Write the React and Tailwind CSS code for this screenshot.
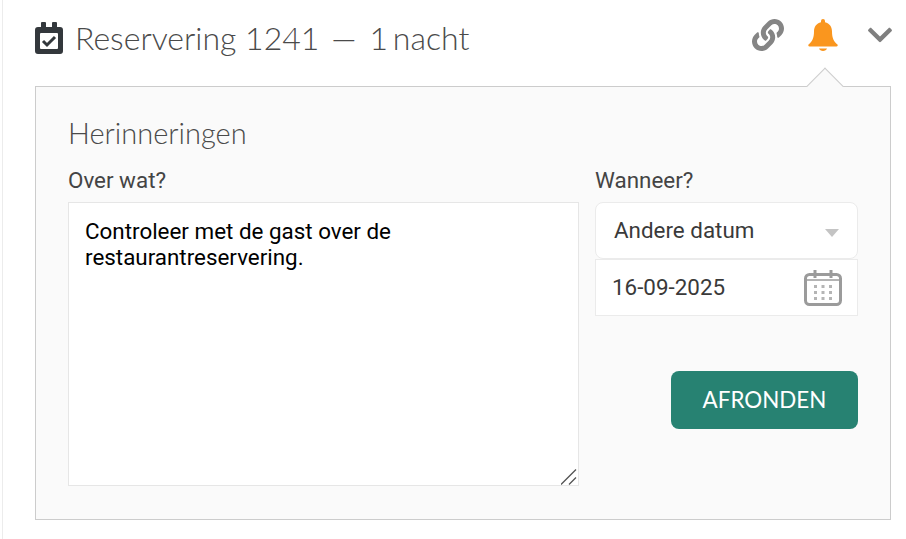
import React from 'react';
import { FaLink, FaChevronDown } from 'react-icons/fa';

function ReservationIcon() {
  return (
    <svg width="28" height="32" viewBox="0 0 28 32" className="shrink-0">
      <path d="M7 0h3a1 1 0 0 1 1 1v4h6V1a1 1 0 0 1 1-1h3a1 1 0 0 1 1 1v4h3a3 3 0 0 1 3 3v21a3 3 0 0 1-3 3H3a3 3 0 0 1-3-3V8a3 3 0 0 1 3-3h3V1a1 1 0 0 1 1-1z" fill="#33383c" />
      <rect x="5" y="11" width="18" height="16" rx="1" fill="#fff" />
      <path d="M8 19l4 4 8-8" fill="none" stroke="#33383c" strokeWidth="3" />
    </svg>
  );
}

function BellIcon() {
  return (
    <svg width="30" height="32" viewBox="0 0 30 32" className="shrink-0">
      <path d="M15 0a2 2 0 0 1 2 2v1.300c4.600 1 7 4.700 7 9.200 0 6.500 2 10.500 5.500 13 .5 1 0 2-1 2H1.500c-1 0-1.500-1-1-2C4 23 6 19 6 12.500 6 8 8.400 4.300 13 3.300V2a2 2 0 0 1 2-2z" fill="#fa961e" />
      <path d="M11 29.500h8c-.5 1.500-2 2.500-4 2.500s-3.500-1-4-2.500z" fill="#fa961e" />
    </svg>
  );
}

function CalendarIcon() {
  return (
    <svg width="38" height="36" viewBox="0 0 38 36" fill="none" className="shrink-0">
      <rect x="1.500" y="4.500" width="35" height="30" rx="4" stroke="#9b9b9b" strokeWidth="3" />
      <path d="M3 10h32" stroke="#9b9b9b" strokeWidth="1.500" />
      <path d="M11 0v8M27 0v8" stroke="#9b9b9b" strokeWidth="3" />
      <path d="M10 15h3v3h-3zM17.500 15h3v3h-3zM25 15h3v3h-3zM10 21h3v3h-3zM17.500 21h3v3h-3zM25 21h3v3h-3zM10 27h3v3h-3zM17.500 27h3v3h-3zM25 27h3v3h-3z" fill="#b5b5b5" />
    </svg>
  );
}

export default function App() {
  return (
    <div className="w-[906px] h-[539px] bg-white overflow-hidden font-['Roboto',sans-serif]">
      <div className="ml-[2px] h-full border-l border-[#ececec] pl-[32px] pr-[15px]">
        <div className="flex items-center h-[86px] pb-[10px]">
          <ReservationIcon />
          <h1 className="ml-[12px] flex font-['Lato',sans-serif] font-light text-[32px] text-[#4a4a4a] whitespace-nowrap">
            <span>Reservering 1241</span>
            <span className="ml-[12px]">—</span>
            <span className="ml-[13px] [word-spacing:-4px]">1 nacht</span>
          </h1>
          <div className="ml-auto mt-[-6px] flex items-center">
            <FaLink className="text-[#858585] text-[32px]" />
            <span className="ml-[24px]"><BellIcon /></span>
            <FaChevronDown className="ml-[28px] mr-[-3px] text-[#7f7f7f] text-[28px]" />
          </div>
        </div>

        <div className="relative h-[434px] border border-[#cccccc] bg-[#fafafa] pt-[31px] px-[32px]">
          <div className="absolute top-[-14px] left-[776px] w-[26px] h-[26px] rotate-45 bg-[#fafafa] border-l border-t border-[#cccccc]" />
          <h2 className="relative font-['Lato',sans-serif] font-light text-[29px] leading-[30px] text-[#4a4a4a]">Herinneringen</h2>
          <div className="relative flex gap-[16px] mt-[19px]">
            <div className="w-[511px]">
              <label className="block text-[22.400px] leading-[26px] text-[#444444]">Over wat?</label>
              <div className="relative mt-[9px]">
                <textarea
                  readOnly
                  className="block w-full h-[284px] bg-white border border-[#e6e6e6] px-[16px] py-[15px] text-[22.400px] leading-[26px] text-black resize-none outline-none"
                  value="Controleer met de gast over de restaurantreservering."
                />
                <svg width="16" height="16" viewBox="0 0 16 16" fill="none" className="absolute right-[2px] bottom-[1px]">
                  <path d="M0 15.500L15 .5M8 15.500L15 8.500" stroke="#555555" strokeWidth="1.300" />
                </svg>
              </div>
            </div>
            <div className="w-[263px]">
              <label className="block text-[22.400px] leading-[26px] text-[#444444]">Wanneer?</label>
              <div className="mt-[9px] flex items-center h-[57px] rounded-[8px] bg-white border border-[#ebebeb] pl-[18px] pr-[18px] text-[22.400px] text-[#3a3a3a]">
                Andere datum
                <span className="ml-auto mt-[4px] w-0 h-0 border-x-[7px] border-x-transparent border-t-[8px] border-t-[#c4c4c4]" />
              </div>
              <div className="flex items-center h-[57px] bg-white border border-[#ebebeb] pl-[16px] pr-[15px] text-[22.400px] text-[#3a3a3a]">
                16-09-2025
                <span className="ml-auto"><CalendarIcon /></span>
              </div>
              <div className="flex justify-end mt-[55px]">
                <button className="w-[187px] h-[58px] rounded-[8px] bg-[#278272] font-['Lato',sans-serif] text-[22.400px] text-white">
                  AFRONDEN
                </button>
              </div>
            </div>
          </div>
        </div>
      </div>
    </div>
  );
}
